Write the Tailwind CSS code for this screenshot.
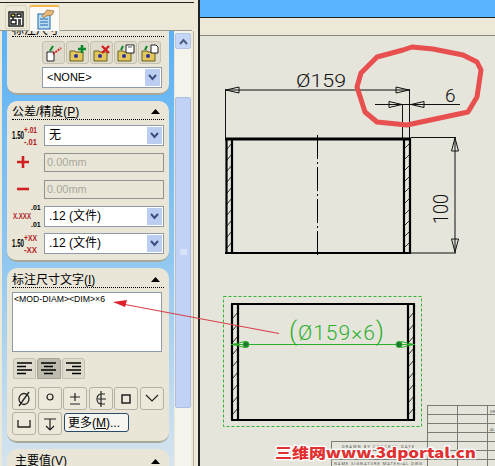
<!DOCTYPE html>
<html><head><meta charset="utf-8">
<script src="https://cdn.jsdelivr.net/npm/@tailwindcss/browser@4"></script>
</head>
<body class="m-0 overflow-hidden">
<div class="relative w-[495px] h-[466px] overflow-hidden flex bg-[#ece9d8] font-['Liberation_Sans','Noto_Sans_CJK_SC',sans-serif] text-black">
  <!-- left task pane -->
  <div class="w-[198px] h-full flex flex-col shrink-0 bg-[#ece9d8]">
    <div class="h-[2px] shrink-0"></div>
    <div class="h-[1px] w-[194px] bg-[#222] shrink-0"></div>
    <div class="h-[28px] shrink-0 flex items-end pl-[5px] gap-[2px] border-b border-[#99988c] mr-[6px]">
      <div class="w-[22px] h-[24px] mb-[1px] rounded-t-[3px] bg-[#ece9d8] border border-[#d8d4c0] flex items-end justify-center pb-[1px]">
        <svg width="16" height="16" viewBox="0 0 16 16" fill="none" stroke="#111" stroke-width="1.4"><rect x="1" y="1" width="14" height="14" fill="#fff"/><rect x="3" y="3" width="4" height="3" fill="#e8d860"/><path d="M9 3h4v3H9zM5 6v3M3 9h5v4H3zM10 9h3M10 11h3M10 13h3"/></svg>
      </div>
      <div class="w-[31px] h-[26px] -mb-[1px] rounded-t-[3px] bg-[#fbfaf6] border-t-2 border-t-[#f2b64a] border-x border-x-[#d8d4c0] flex items-start justify-center pt-[1px]">
        <svg width="22" height="22" viewBox="0 0 22 22"><rect x="4" y="6" width="12" height="15" fill="#bcdcf4" stroke="#1e6aa8"/><path d="M6 11h8M6 14h8M6 17h8" stroke="#1e6aa8"/><path d="M8 8l5-6 7 1-2 4-6 1-2 2z" fill="#e8b878" stroke="#8a6a3a" stroke-width=".7"/></svg>
      </div>
    </div>
    <div class="flex-1 flex min-h-0">
      <!-- scrolled column -->
      <div class="w-[172px] shrink-0 ml-[2px] overflow-hidden bg-gradient-to-b from-[#5ab2f6] via-[#8cc6f2] to-[#d6e4ee] px-[5px] flex flex-col gap-[6px]">
        <!-- card 1 -->
        <div class="bg-[#e9e6d8] rounded-b-[10px] border-b-2 border-[#a8a898] h-[64px] shrink-0 px-[5px] relative">
          <div class="h-[6px] border-b border-dotted border-black overflow-hidden text-[12px] leading-[8px]"><span class="relative -top-[5px]">标注尺寸</span></div>
          <div class="flex gap-[1px] pl-[30px] mt-[4px]">
            <div class="w-[23px] h-[23px] rounded-[3px] bg-[#dedbcc] border border-[#c4c1b0] flex items-center justify-center"><svg width="18" height="18" viewBox="0 0 18 18"><path d="M2 8h7v9H2z" fill="#fff" stroke="#222"/><path d="M5 7l3-5" stroke="#0a8a2a" stroke-width="2"/><path d="M8 10l8-6" stroke="#d02020" stroke-width="2" stroke-dasharray="2 1"/></svg></div>
            <div class="w-[23px] h-[23px] rounded-[3px] bg-[#dedbcc] border border-[#c4c1b0] flex items-center justify-center"><svg width="18" height="18" viewBox="0 0 18 18"><path d="M1 7h5l1 1h7v9H1z" fill="#e2c85a" stroke="#6a5a20"/><circle cx="7" cy="12" r="2" fill="#3030a0"/><path d="M13 1v8M9 5h8" stroke="#0a8a2a" stroke-width="2.6"/></svg></div>
            <div class="w-[23px] h-[23px] rounded-[3px] bg-[#dedbcc] border border-[#c4c1b0] flex items-center justify-center"><svg width="18" height="18" viewBox="0 0 18 18"><path d="M1 7h5l1 1h7v9H1z" fill="#e2c85a" stroke="#6a5a20"/><circle cx="7" cy="12" r="2" fill="#3030a0"/><path d="M9 2l7 7M16 2l-7 7" stroke="#d02020" stroke-width="2.4"/></svg></div>
            <div class="w-[23px] h-[23px] rounded-[3px] bg-[#dedbcc] border border-[#c4c1b0] flex items-center justify-center"><svg width="18" height="18" viewBox="0 0 18 18"><path d="M1 7h5l1 1h7v9H1z" fill="#e2c85a" stroke="#6a5a20"/><circle cx="7" cy="12" r="2" fill="#3030a0"/><path d="M4 6l2-4" stroke="#0a8a2a" stroke-width="2"/><path d="M9 1h8v8H9z" fill="#fff" stroke="#222"/><path d="M11 1h4v3h-4z" fill="#aaa"/></svg></div>
            <div class="w-[23px] h-[23px] rounded-[3px] bg-[#dedbcc] border border-[#c4c1b0] flex items-center justify-center"><svg width="18" height="18" viewBox="0 0 18 18"><path d="M1 7h5l1 1h7v9H1z" fill="#e2c85a" stroke="#6a5a20"/><circle cx="7" cy="12" r="2" fill="#3030a0"/><path d="M4 6l2-4" stroke="#0a8a2a" stroke-width="2"/><path d="M10 1h5l2 2v6h-7z" fill="#fff" stroke="#222"/></svg></div>
          </div>
          <div class="mt-[3px] ml-[30px] w-[120px] h-[21px] bg-white border border-[#8f9ba8] flex items-center justify-between pl-[4px] pr-[1px] text-[11px]"><span>&lt;NONE&gt;</span>
            <div class="w-[15px] h-[17px] bg-[#bccdf2] flex items-center justify-center"><svg width="9" height="7" viewBox="0 0 9 7" fill="none" stroke="#3a5080" stroke-width="2"><path d="M1 1l3.500 4L8 1"/></svg></div></div>
        </div>
        <!-- card 2 -->
        <div class="bg-[#e9e6d8] rounded-[10px] border-b-2 border-[#a8a898] h-[161px] shrink-0 px-[5px] pt-[4px]">
          <div class="h-[15px] border-b border-dotted border-black flex justify-between items-center text-[12px] pr-[4px] pb-[1px]"><span>公差/精度(<u>P</u>)</span><svg width="9" height="5" viewBox="0 0 9 5"><path d="M0 5L4.500 0 9 5z"/></svg></div>
          <div class="flex flex-col mt-[4px] gap-[5px]">
            <div class="flex items-center justify-between h-[22px]">
              <svg class="overflow-visible" width="28" height="22" viewBox="0 0 28 22"><text x="0" y="15" font-size="10" font-weight="700" textLength="12" lengthAdjust="spacingAndGlyphs">1.50</text><text x="12" y="9" font-size="9" font-weight="700" fill="#b02020" textLength="13" lengthAdjust="spacingAndGlyphs">+.01</text><text x="12" y="21" font-size="9" font-weight="700" fill="#b02020" textLength="13" lengthAdjust="spacingAndGlyphs">-.01</text></svg>
              <div class="w-[120px] h-[21px] bg-white border border-[#8f9ba8] flex items-center justify-between pl-[4px] pr-[1px] text-[12px]"><span>无</span><div class="w-[15px] h-[17px] bg-[#bccdf2] flex items-center justify-center"><svg width="9" height="7" viewBox="0 0 9 7" fill="none" stroke="#3a5080" stroke-width="2"><path d="M1 1l3.500 4L8 1"/></svg></div></div>
            </div>
            <div class="flex items-center justify-between h-[22px]">
              <svg class="ml-[5px]" width="12" height="12" viewBox="0 0 12 12"><path d="M6 0v12M0 6h12" stroke="#d02020" stroke-width="2.600"/></svg>
              <div class="w-[120px] h-[19px] bg-[#e9e6d8] border border-[#8f9491] flex items-center pl-[2px] text-[11px] text-[#a8a89c]">0.00mm</div>
            </div>
            <div class="flex items-center justify-between h-[22px]">
              <svg class="ml-[5px]" width="12" height="4" viewBox="0 0 12 4"><path d="M0 2h12" stroke="#d02020" stroke-width="2.600"/></svg>
              <div class="w-[120px] h-[19px] bg-[#e9e6d8] border border-[#8f9491] flex items-center pl-[2px] text-[11px] text-[#a8a89c]">0.00mm</div>
            </div>
            <div class="flex items-center justify-between h-[22px]">
              <svg class="overflow-visible" width="28" height="22" viewBox="0 0 28 22"><text x="19" y="5" font-size="7" font-weight="700">.01</text><text x="1" y="14" font-size="9" font-weight="700" fill="#b02020" textLength="18" lengthAdjust="spacingAndGlyphs">X.XXX</text><text x="19" y="22" font-size="7" font-weight="700">.01</text></svg>
              <div class="w-[120px] h-[21px] bg-white border border-[#8f9ba8] flex items-center justify-between pl-[4px] pr-[1px] text-[12px]"><span>.12 (文件)</span><div class="w-[15px] h-[17px] bg-[#bccdf2] flex items-center justify-center"><svg width="9" height="7" viewBox="0 0 9 7" fill="none" stroke="#3a5080" stroke-width="2"><path d="M1 1l3.500 4L8 1"/></svg></div></div>
            </div>
            <div class="flex items-center justify-between h-[22px]">
              <svg class="overflow-visible" width="28" height="22" viewBox="0 0 28 22"><text x="0" y="15" font-size="10" font-weight="700" textLength="12" lengthAdjust="spacingAndGlyphs">1.50</text><text x="12" y="9" font-size="9" font-weight="700" fill="#b02020" textLength="13" lengthAdjust="spacingAndGlyphs">+XX</text><text x="12" y="21" font-size="9" font-weight="700" fill="#b02020" textLength="13" lengthAdjust="spacingAndGlyphs">-XX</text></svg>
              <div class="w-[120px] h-[21px] bg-white border border-[#8f9ba8] flex items-center justify-between pl-[4px] pr-[1px] text-[12px]"><span>.12 (文件)</span><div class="w-[15px] h-[17px] bg-[#bccdf2] flex items-center justify-center"><svg width="9" height="7" viewBox="0 0 9 7" fill="none" stroke="#3a5080" stroke-width="2"><path d="M1 1l3.500 4L8 1"/></svg></div></div>
            </div>
          </div>
        </div>
        <!-- card 3 -->
        <div class="bg-[#e9e6d8] rounded-[10px] border-b-2 border-[#a8a898] h-[175px] shrink-0 px-[5px] pt-[5px]">
          <div class="h-[15px] border-b border-dotted border-black flex justify-between items-center text-[12px] pr-[4px] pb-[1px]"><span>标注尺寸文字(<u>I</u>)</span><svg width="9" height="5" viewBox="0 0 9 5"><path d="M0 5L4.500 0 9 5z"/></svg></div>
          <div class="mt-[4px] h-[60px] w-[150px] bg-white border border-[#8f9ba8] px-[1px] pt-[1px] text-[8.7px] leading-[11px]">&lt;MOD-DIAM&gt;&lt;DIM&gt;×6</div>
          <div class="flex gap-[1px] mt-[6px] pl-[1px] h-[22px]">
            <div class="w-[23px] h-[21px] rounded-t-[3px] bg-[#dedbcc] border border-[#c4c1b0] flex items-center justify-center"><svg width="16" height="13" viewBox="0 0 16 13" stroke="#000" stroke-width="1.500"><path d="M0 1h15M0 4.500h9M0 8h15M0 11.500h9"/></svg></div>
            <div class="w-[24px] h-[21px] rounded-t-[3px] bg-[#bdbbae] border border-[#a4a296] flex items-center justify-center"><svg width="16" height="13" viewBox="0 0 16 13" stroke="#000" stroke-width="1.500"><path d="M0 1h15M3 4.500h9M0 8h15M3 11.500h9"/></svg></div>
            <div class="w-[23px] h-[21px] rounded-t-[3px] bg-[#dedbcc] border border-[#c4c1b0] flex items-center justify-center"><svg width="16" height="13" viewBox="0 0 16 13" stroke="#000" stroke-width="1.500"><path d="M0 1h15M6 4.500h9M0 8h15M6 11.500h9"/></svg></div>
          </div>
          <div class="grid grid-cols-[repeat(6,24px)] gap-x-[1.600px] mt-[7px] w-[155px]">
            <div class="h-[23px] rounded-[3px] bg-[#ece9da] border border-[#b4b2a4] flex items-center justify-center"><svg width="14" height="16" viewBox="0 0 14 16" fill="none" stroke="#222" stroke-width="1.300"><ellipse cx="7" cy="8" rx="5" ry="5.500"/><path d="M12 1L2 15"/></svg></div>
            <div class="h-[23px] rounded-[3px] bg-[#ece9da] border border-[#b4b2a4] flex items-center justify-center"><svg width="14" height="16" viewBox="0 0 14 16" fill="none" stroke="#222" stroke-width="1.200"><circle cx="7" cy="6" r="3"/></svg></div>
            <div class="h-[23px] rounded-[3px] bg-[#ece9da] border border-[#b4b2a4] flex items-center justify-center"><svg width="14" height="16" viewBox="0 0 14 16" fill="none" stroke="#222" stroke-width="1.200"><path d="M7 2v8M2 6h10M2 13h10"/></svg></div>
            <div class="h-[23px] rounded-[3px] bg-[#ece9da] border border-[#b4b2a4] flex items-center justify-center"><svg width="14" height="18" viewBox="0 0 14 18" fill="none" stroke="#222" stroke-width="1.200"><path d="M11 4H7a4 5 0 0 0 0 10h4M7 1v16M4 9h8"/></svg></div>
            <div class="h-[23px] rounded-[3px] bg-[#ece9da] border border-[#b4b2a4] flex items-center justify-center"><svg width="14" height="14" viewBox="0 0 14 14" fill="none" stroke="#222" stroke-width="1.500"><rect x="3" y="3" width="8" height="8"/></svg></div>
            <div class="h-[23px] rounded-[3px] bg-[#ece9da] border border-[#b4b2a4] flex items-center justify-center"><svg width="14" height="10" viewBox="0 0 14 10" fill="none" stroke="#222" stroke-width="1.200"><path d="M1 1l6 6 6-6"/></svg></div>
          </div>
          <div class="flex gap-[2px] mt-[2px] items-start">
            <div class="w-[24px] h-[23px] rounded-[3px] bg-[#ece9da] border border-[#b4b2a4] flex items-center justify-center"><svg width="14" height="10" viewBox="0 0 14 10" fill="none" stroke="#222" stroke-width="1.300"><path d="M1 1v7h12V1"/></svg></div>
            <div class="w-[24px] h-[23px] rounded-[3px] bg-[#ece9da] border border-[#b4b2a4] flex items-center justify-center"><svg width="14" height="14" viewBox="0 0 14 14" fill="none" stroke="#222" stroke-width="1.200"><path d="M1 2h12M7 2v11M3 9l4 4 4-4"/></svg></div>
            <div class="w-[65px] h-[19px] mt-[1px] rounded-[3px] bg-[#f6f5ef] border border-[#2a4a6a] flex items-center pl-[3px] text-[12px]">更多(<u>M</u>)...</div>
          </div>
        </div>
        <!-- card 4 -->
        <div class="bg-[#e9e6d8] rounded-t-[10px] h-[30px] shrink-0 px-[8px] pt-[3px]">
          <div class="flex justify-between items-center text-[12px] pr-[1px]"><span>主要值(<u>V</u>)</span><svg width="9" height="5" viewBox="0 0 9 5"><path d="M0 5L4.500 0 9 5z"/></svg></div>
        </div>
      </div>
      <!-- scrollbar -->
      <div class="w-[16px] ml-[1px] shrink-0 flex flex-col bg-[#f4f3ec]">
        <div class="h-[16px] mt-[2px] rounded-[2px] bg-[#c6d6f6] border border-[#b4c4e4] flex items-center justify-center"><svg width="9" height="7" viewBox="0 0 9 7" fill="none" stroke="#4a6088" stroke-width="2"><path d="M1 6l3.500-4L8 6"/></svg></div>
        <div class="mt-[48px] h-[311px] rounded-[2px] bg-[#c2d2f6] border border-[#aebee2] flex items-center justify-center"><svg width="7" height="7" viewBox="0 0 7 7" stroke="#eef2fc"><path d="M0 1h7M0 3h7M0 5h7"/></svg></div>
      </div>
      <div class="w-[3px] shrink-0 bg-[#ece9d8] border-r border-[#b4b2a4]"></div>
    </div>
  </div>
  <div class="w-[2px] h-full bg-[#222] shrink-0"></div>
  <!-- right side -->
  <div class="flex-1 flex flex-col">
    <div class="h-[17px] bg-[#5ab4ff] shrink-0"></div>
    <div class="h-[19px] bg-[#ece9d8] border-y border-t-[#222] border-b-[#8a8a7c] shrink-0"></div>
    <div class="flex-1 bg-[#e5e5dc]"></div>
  </div>
  <!-- drawing, free canvas lying over the pane -->
  <svg class="absolute inset-0" width="495" height="466" viewBox="0 0 495 466" fill="none" font-family="Roboto,'DejaVu Sans',sans-serif" font-weight="300">
    <g stroke="#111" stroke-width="1">
      <path d="M225.500 89v49M409.500 89v49M402.500 104v34"/>
      <path d="M225.500 90H410M375 104.500h85"/>
      <path d="M226 90l13-3v6zM409 90l-13-3v6zM402 104.500l-13-3v6zM411 104.500l13-3v6z"/>
      <path d="M411 137.500h45M411 253h45M455 137.500V253"/>
      <path d="M455 138l-3.500 13h7zM455 252l-3.500-13h7z"/>
    </g>
    <text x="296" y="87" font-size="19" fill="#111" textLength="50" lengthAdjust="spacingAndGlyphs">Ø159</text>
    <text x="445" y="102" font-size="19" fill="#111">6</text>
    <text transform="translate(448,224) rotate(-90)" font-size="20" fill="#111" textLength="30" lengthAdjust="spacingAndGlyphs">100</text>
    <path d="M412 47L433 49L463 55L477 62L481 70L477 97L468 112L407 125L377 122L365 112L357 87L361 73L377 57L403 50Z" stroke="#e85050" stroke-width="5" stroke-linejoin="round"/>
    <g stroke="#000">
      <path d="M225 139h186" stroke-width="3"/>
      <path d="M225 253h186" stroke-width="2"/>
      <path d="M226.500 138v116M232 138v116M404 138v116M410 138v116" stroke-width="2.200"/>
      <path d="M227 149l5-6M227 160l5-6M227 171l5-6M227 182l5-6M227 193l5-6M227 204l5-6M227 215l5-6M227 226l5-6M227 237l5-6M227 248l5-6M404 149l6-6M404 160l6-6M404 171l6-6M404 182l6-6M404 193l6-6M404 204l6-6M404 215l6-6M404 226l6-6M404 237l6-6M404 248l6-6" stroke-width=".8"/>
      <path d="M317.500 135v123" stroke-dasharray="24 3 2 3" stroke-width="1"/>
    </g>
    <rect x="223.500" y="296.500" width="198" height="130" stroke="#35b035" stroke-dasharray="3 2"/>
    <g stroke="#000">
      <path d="M231 304h184M231 420h184" stroke-width="2"/>
      <path d="M232 304v116M238 304v116M408 304v116M414 304v116" stroke-width="2.200"/>
      <path d="M233 318l5-6M233 330l5-6M233 342l5-6M233 354l5-6M233 366l5-6M233 378l5-6M233 390l5-6M233 402l5-6M233 414l5-6M409 318l5-6M409 330l5-6M409 342l5-6M409 354l5-6M409 366l5-6M409 378l5-6M409 390l5-6M409 402l5-6M409 414l5-6" stroke-width=".8"/>
    </g>
    <path d="M231 344.500h184" stroke="#2cb02c" stroke-width="1.200"/>
    <path d="M232 344.500l13-3v6zM414 344.500l-13-3v6z" stroke="#2cb02c"/>
    <circle cx="246" cy="344.500" r="3" fill="#1e7a30" stroke="#2cb02c"/>
    <circle cx="399" cy="344.500" r="3" fill="#1e7a30" stroke="#2cb02c"/>
    <text x="289" y="340" font-size="21" fill="#2cb02c" textLength="95" lengthAdjust="spacing"><tspan font-size="25">(</tspan>Ø159×6<tspan font-size="25">)</tspan></text>
    <path d="M279 333.500L125 304.500" stroke="#d84048" stroke-width="1.200"/>
    <path d="M113 302l14-2-2 7z" fill="#e02028"/>
    <g stroke="#7c7c74">
      <path d="M427 405.500h68M427 414.500h68M427 423.500h68M427 432.500h68M427 441.500h68M331 441.500h96M331 450.500h164M331 459.500h164"/>
      <path d="M427.500 405v61M457.500 405v61M487.500 405v61M331.500 441v25"/>
    </g>
    <text x="342" y="448" font-size="4" font-weight="400" fill="#555" textLength="72">DRAWN BY CHECKED DATE</text>
    <text x="334" y="465" font-size="4" font-weight="400" fill="#555" textLength="88">NAME SIGNATURE MATERIAL DWG</text>
    <text x="490" y="413" font-size="4" font-weight="400" fill="#555">DR</text>
    <text x="490" y="431" font-size="4" font-weight="400" fill="#555">AL</text>
    <text x="275" y="458" font-size="14" font-weight="900" fill="#e03030" stroke="#fff" stroke-width="2.500" paint-order="stroke" textLength="201" lengthAdjust="spacingAndGlyphs" font-family="'Noto Sans CJK SC','Liberation Sans',sans-serif">三维网www.3dportal.cn</text>
  </svg>
</div>
</body></html>
